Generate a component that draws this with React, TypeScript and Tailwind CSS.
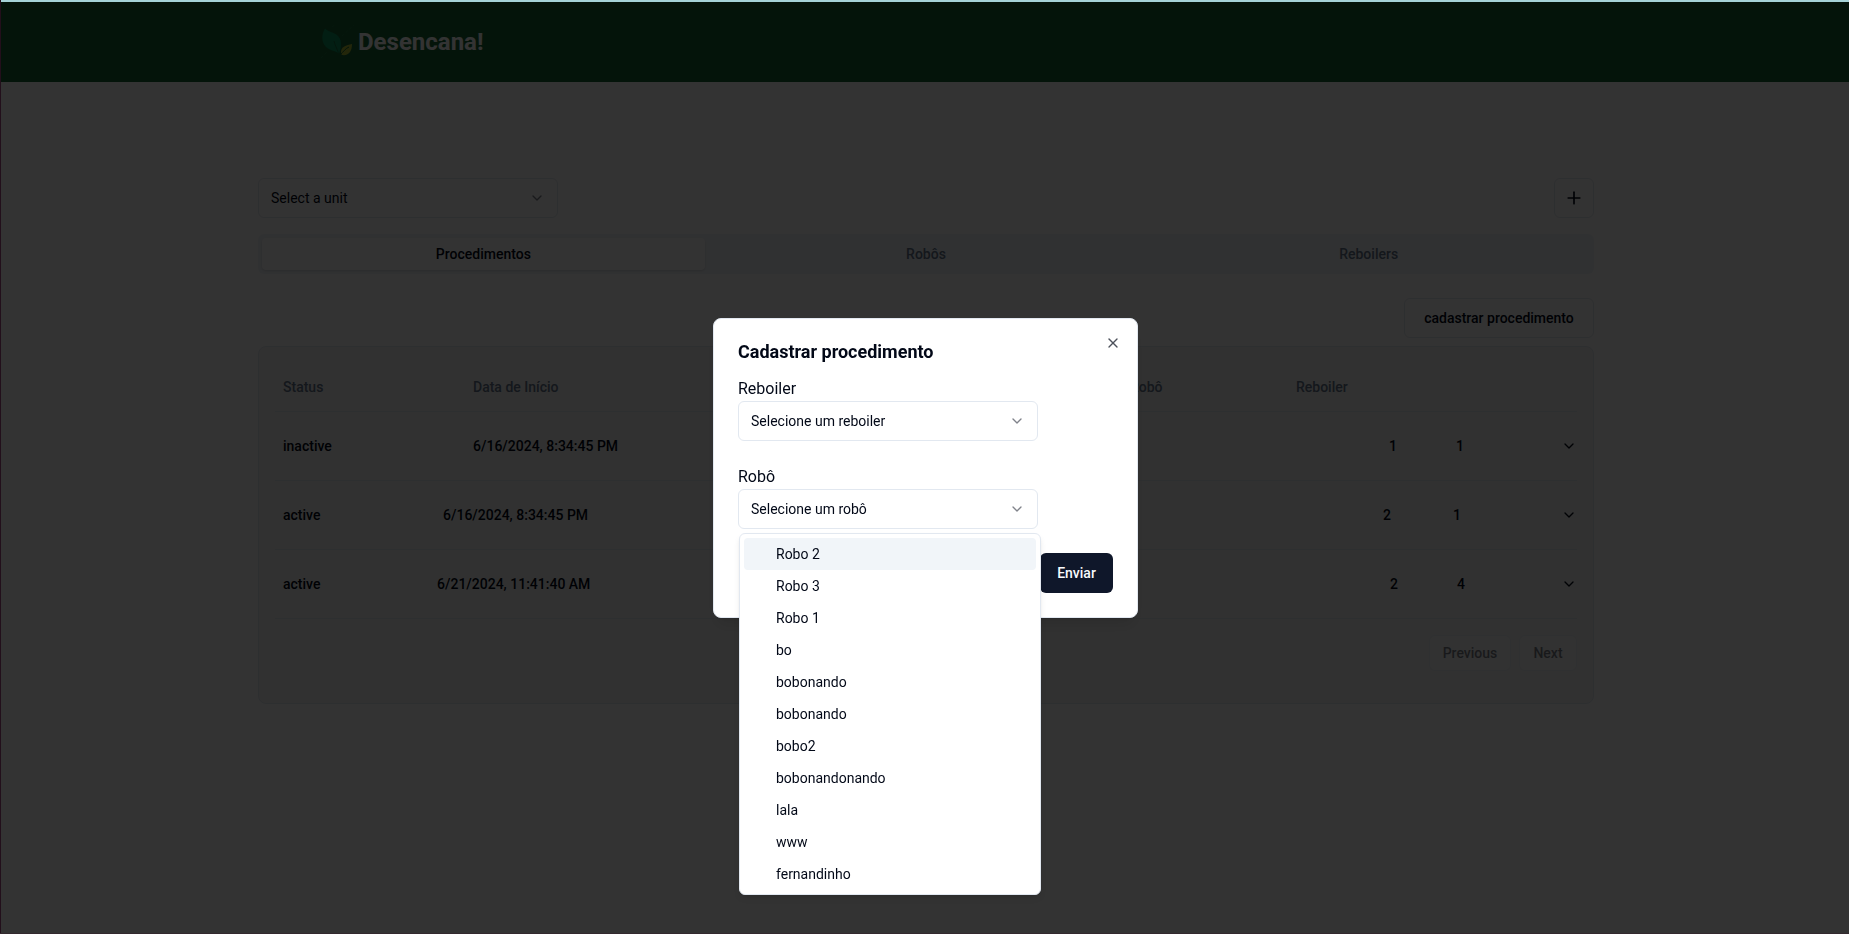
import React from "react";
import { ChevronDown, Plus, X } from "lucide-react";

type Procedure = {
  status: string;
  start: string;
  robot: string;
  reboiler: string;
  columns: string;
};

const procedures: Procedure[] = [
  {
    status: "inactive",
    start: "6/16/2024, 8:34:45 PM",
    robot: "1",
    reboiler: "1",
    columns: "grid-cols-[190fr_916fr_67fr_129fr]",
  },
  {
    status: "active",
    start: "6/16/2024, 8:34:45 PM",
    robot: "2",
    reboiler: "1",
    columns: "grid-cols-[160fr_940fr_70fr_132fr]",
  },
  {
    status: "active",
    start: "6/21/2024, 11:41:40 AM",
    robot: "2",
    reboiler: "4",
    columns: "grid-cols-[154fr_953fr_67fr_128fr]",
  },
];

const robots = [
  "Robo 2",
  "Robo 3",
  "Robo 1",
  "bo",
  "bobonando",
  "bobonando",
  "bobo2",
  "bobonandonando",
  "lala",
  "www",
  "fernandinho",
];

const tabs = ["Procedimentos", "Robôs", "Reboilers"];

function Leaves() {
  return (
    <svg viewBox="-2 0 36 36" className="size-9" fill="none" aria-hidden="true">
      <path d="M5 4.500C1.500 10 1 18 6 23c4 4 10 3.500 13 7 3-8 3-15-2-19C13 8 8.500 8 5 4.500Z" fill="#0a9460" />
      <path d="M14 17c1 5 4 9 5 14" stroke="#166534" strokeWidth="0.8" />
      <path d="M32 20c-6 1-11 3-11 8 0 1 0 2 1 3 7 1 10-4 10-11Z" fill="#aebf35" />
      <path d="M29 23c-3 1-6 5-9 8" stroke="#166534" strokeWidth="1" />
      <path d="M12 3l4-3M22 12l12-11M1 34l7-7" stroke="#1d7340" strokeWidth="1" strokeDasharray="3 2" />
    </svg>
  );
}

function SelectField({ id, placeholder, label }: { id: string; placeholder: string; label?: string }) {
  return (
    <div className="w-[300px]">
      {label && (
        <label htmlFor={id} className="block text-base">
          {label}
        </label>
      )}
      <div className="grid items-center">
        <select
          id={id}
          aria-label={label ? undefined : placeholder}
          className="col-start-1 row-start-1 h-10 w-full appearance-none rounded-md border border-[#e2e8f0] bg-white px-3 text-sm"
        >
          <option>{placeholder}</option>
        </select>
        <ChevronDown className="pointer-events-none col-start-1 row-start-1 mr-[13px] size-4 justify-self-end opacity-50" />
      </div>
    </div>
  );
}

function Dialog() {
  return (
    <div className="fixed inset-0 z-20 flex items-center justify-center pt-0.5 pl-0.5">
      <div
        role="dialog"
        aria-labelledby="dialog-title"
        className="relative w-full max-w-[425px] rounded-lg border border-[#e2e8f0] bg-white p-6 shadow-lg"
      >
        <h2 id="dialog-title" className="mb-4 text-lg leading-[18px] font-bold">
          Cadastrar procedimento
        </h2>
        <form className="flex flex-col gap-6">
          <SelectField id="reboiler" label="Reboiler" placeholder="Selecione um reboiler" />
          <div className="relative">
            <SelectField id="robot" label="Robô" placeholder="Selecione um robô" />
            <ul
              role="listbox"
              aria-label="Robô"
              className="absolute top-full left-px z-30 mt-1 w-[302px] rounded-md border border-[#e2e8f0] bg-white p-1 shadow-md"
            >
              {robots.map((name, i) => (
                <li
                  key={i}
                  role="option"
                  aria-selected={i === 0}
                  className={`rounded-sm py-1.5 pr-2 pl-8 text-sm ${i === 0 ? "bg-[#f1f5f9]" : ""}`}
                >
                  {name}
                </li>
              ))}
            </ul>
          </div>
          <button
            type="button"
            className="h-10 min-w-[73px] self-end rounded-md bg-[#0f172a] text-sm font-medium text-slate-50"
          >
            Enviar
          </button>
        </form>
        <button type="button" aria-label="Close" className="absolute top-4 right-4 opacity-70">
          <X className="size-4" />
        </button>
      </div>
    </div>
  );
}

export default function App() {
  return (
    <div className="min-h-screen bg-white pt-0.5 pl-[3px] font-[Roboto,sans-serif] text-sm text-[#020817]">
      <header className="-ml-[3px] h-20 bg-[#166534] pl-[3px]">
        <div className="mx-auto flex h-full max-w-[1280px] items-center gap-1 px-8">
          <Leaves />
          <span className="text-2xl font-bold text-white">Desencana!</span>
        </div>
      </header>

      <main className="mx-auto max-w-[1400px] px-8 pt-24">
        <div className="flex justify-between">
          <SelectField id="unit" placeholder="Select a unit" />
          <button
            type="button"
            aria-label="Adicionar"
            className="flex size-10 items-center justify-center rounded-md border border-[#e2e8f0]"
          >
            <Plus className="size-5" />
          </button>
        </div>

        <div role="tablist" className="mt-4 grid h-10 grid-cols-3 rounded-md bg-[#f1f5f9] p-1">
          {tabs.map((tab, i) => (
            <button
              key={tab}
              type="button"
              role="tab"
              aria-selected={i === 0}
              className={`rounded-sm font-medium ${i === 0 ? "bg-white shadow-sm" : "text-[#64748b]"}`}
            >
              {tab}
            </button>
          ))}
        </div>

        <div className="mt-6 flex justify-end">
          <button type="button" className="h-10 min-w-[190px] rounded-md border border-[#e2e8f0] font-medium">
            cadastrar procedimento
          </button>
        </div>

        <section className="mt-2 rounded-lg border border-[#e2e8f0] bg-neutral-100 p-4">
          <table className="block w-full text-left font-medium">
            <thead className="block">
              <tr className="grid h-[49px] grid-cols-[190fr_657fr_166fr_289fr] items-center border-b border-[#e2e8f0] text-[#64748b]">
                <th className="px-2 font-medium">Status</th>
                <th className="px-2 font-medium">Data de Início</th>
                <th className="px-2 font-medium">Robô</th>
                <th className="px-2 font-medium">Reboiler</th>
              </tr>
            </thead>
            <tbody className="block">
              {procedures.map((p, i) => (
                <tr key={i} className={`grid h-[69px] items-center border-b border-[#e2e8f0] ${p.columns}`}>
                  <td className="px-2">{p.status}</td>
                  <td className="px-2">{p.start}</td>
                  <td className="px-2">{p.robot}</td>
                  <td className="flex items-center justify-between pl-2">
                    {p.reboiler}
                    <button type="button" aria-label="Detalhes">
                      <ChevronDown className="size-4" />
                    </button>
                  </td>
                </tr>
              ))}
            </tbody>
          </table>
          <div className="flex justify-end gap-2 py-4">
            <button
              type="button"
              disabled
              className="h-9 min-w-[82px] rounded-md border border-[#e2e8f0] bg-white font-medium opacity-50"
            >
              Previous
            </button>
            <button
              type="button"
              disabled
              className="h-9 min-w-[58px] rounded-md border border-[#e2e8f0] bg-white font-medium opacity-50"
            >
              Next
            </button>
          </div>
        </section>
      </main>

      <div className="fixed inset-0 z-10 bg-black/80" />
      <Dialog />
      <div className="fixed inset-x-0 top-0 z-40 h-0.5 bg-[#a5d3d7]" />
      <div className="fixed inset-y-0 left-0 z-40 w-px bg-[#220f1b]" />
      <div className="fixed inset-x-0 bottom-0 z-40 h-px bg-[#33292e]" />
    </div>
  );
}
